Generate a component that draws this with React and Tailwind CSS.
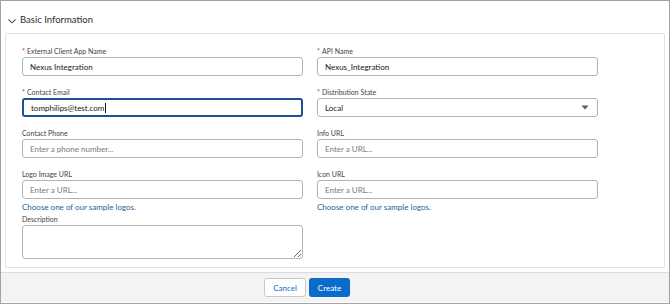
import React from 'react';

const Label = ({ text, required }) => (
  <div className="h-[12px] leading-[12px] text-[7px] text-[#444444] whitespace-nowrap">
    {required && <span className="text-[#c23934] mr-[2px]">*</span>}
    {text}
  </div>
);

const TextInput = ({ value, placeholder, focused }) => (
  <div
    className={`h-[19px] rounded-[3px] bg-white flex items-center px-[7px] text-[8px] ${
      focused ? 'border-2 border-[#1b5297] px-[6px]' : 'border border-[#b4b4b4]'
    }`}
  >
    {value ? (
      <span className="text-[#181818]">
        {value}
        {focused && <span className="inline-block w-px h-[10px] bg-[#181818] align-middle ml-px" />}
      </span>
    ) : (
      <span className="text-[#7a7a7a]">{placeholder}</span>
    )}
  </div>
);

const Field = ({ label, required, children, className = '' }) => (
  <div className={`flex flex-col ${className}`}>
    <Label text={label} required={required} />
    {children}
  </div>
);

const SampleLink = () => (
  <a href="#" className="block mt-[2px] h-[12px] leading-[12px] text-[8px] text-[#1f5f99]">
    Choose one of our sample logos.
  </a>
);

const App = () => {
  return (
    <div className="w-[670px] h-[304px] bg-white border border-[#a2a2a2] flex flex-col font-['Lato',sans-serif] overflow-hidden">
      {/* Section header */}
      <div className="h-[32px] flex items-center pl-[6px] pt-[7px] shrink-0">
        <svg width="10" height="10" viewBox="0 0 10 10" className="mr-[3px]">
          <path d="M1.5 3.5 L5 6.8 L8.5 3.5" fill="none" stroke="#555" strokeWidth="1.1" />
        </svg>
        <span className="text-[9.5px] text-[#2b2b2b]">Basic Information</span>
      </div>

      {/* Form card */}
      <div className="mx-[4px] border border-[#e2e2e2] rounded-[2px] pt-[11px] pb-[8px] pl-[16px]">
        <div className="grid grid-cols-[281px_281px] gap-x-[14px]">
          <Field label="External Client App Name" required className="mb-[10px]">
            <TextInput value="Nexus Integration" />
          </Field>
          <Field label="API Name" required className="mb-[10px]">
            <TextInput value="Nexus_Integration" />
          </Field>

          <Field label="Contact Email" required className="mb-[10px]">
            <TextInput value="tomphilips@test.com" focused />
          </Field>
          <Field label="Distribution State" required className="mb-[10px]">
            <div className="h-[19px] rounded-[3px] border border-[#b4b4b4] bg-white flex items-center justify-between px-[7px] text-[8px] text-[#181818]">
              <span>Local</span>
              <svg width="8" height="5" viewBox="0 0 8 5" className="mr-[1px]">
                <path d="M0.5 0.5 H7.5 L4 4.5 Z" fill="#5c5c5c" />
              </svg>
            </div>
          </Field>

          <Field label="Contact Phone" className="mb-[10px]">
            <TextInput placeholder="Enter a phone number..." />
          </Field>
          <Field label="Info URL" className="mb-[10px]">
            <TextInput placeholder="Enter a URL..." />
          </Field>

          <Field label="Logo Image URL">
            <TextInput placeholder="Enter a URL..." />
            <SampleLink />
          </Field>
          <Field label="Icon URL">
            <TextInput placeholder="Enter a URL..." />
            <SampleLink />
          </Field>

          <Field label="Description">
            <textarea
              className="h-[34px] w-full rounded-[3px] border border-[#b4b4b4] bg-white resize-y outline-none"
            />
          </Field>
        </div>
      </div>

      {/* Footer */}
      <div className="mt-auto mb-[1px] h-[30px] bg-[#f3f3f3] border-t border-[#dddddd] flex items-center pl-[263px] gap-[3px]">
        <button className="h-[19px] w-[42px] rounded-[3px] border border-[#c9c9c9] bg-white text-[8px] text-[#0b6bcb]">
          Cancel
        </button>
        <button className="h-[19px] w-[41px] rounded-[3px] bg-[#0b6bcb] text-[8px] text-white">
          Create
        </button>
      </div>
    </div>
  );
};

export default App;
